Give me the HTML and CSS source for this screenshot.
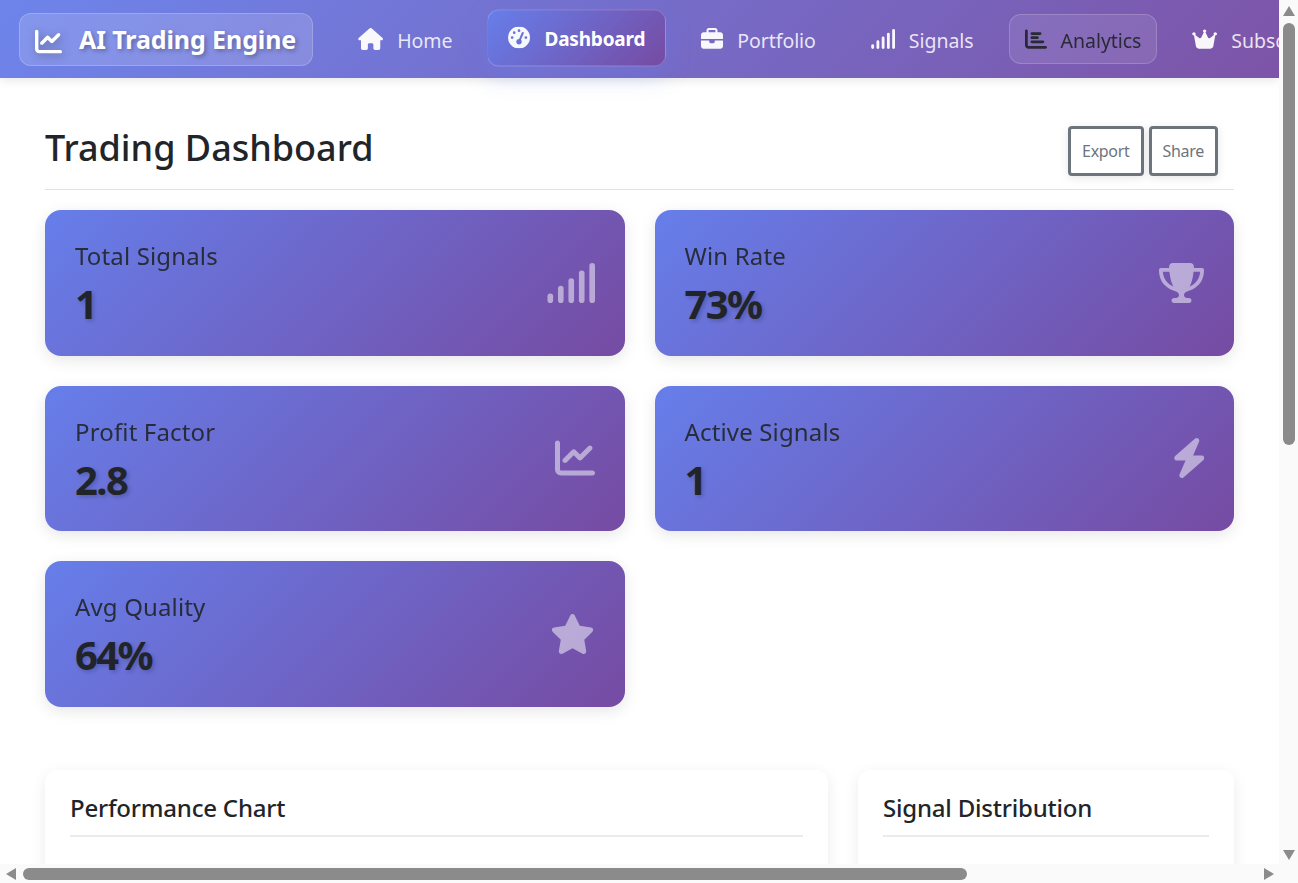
FILE: index.html
```html
<!DOCTYPE html>
<html lang="en">
<head>
    <meta charset="UTF-8">
    <meta name="viewport" content="width=device-width, initial-scale=1.0">
    <title>Trading Dashboard</title>
    <link rel="stylesheet" href="styles.css">
</head>
<body>
    <svg class="icon-defs" aria-hidden="true">
        <symbol id="i-chart-line" viewBox="0 0 512 512" preserveAspectRatio="xMaxYMid"><path d="M64 64c0-17.7-14.3-32-32-32S0 46.3 0 64V400c0 44.2 35.8 80 80 80H480c17.7 0 32-14.3 32-32s-14.3-32-32-32H80c-8.8 0-16-7.2-16-16V64zm406.6 86.6c12.5-12.5 12.5-32.8 0-45.3s-32.8-12.5-45.3 0L320 210.7l-57.4-57.4c-12.5-12.5-32.8-12.5-45.3 0l-112 112c-12.5 12.5-12.5 32.8 0 45.3s32.8 12.5 45.3 0L240 221.3l57.4 57.4c12.5 12.5 32.8 12.5 45.3 0l128-128z"/></symbol>
        <symbol id="i-signal" viewBox="0 0 608 512" preserveAspectRatio="xMaxYMid"><rect x="0" y="389" width="72" height="123" rx="36"/><rect x="134" y="291" width="72" height="221" rx="36"/><rect x="268" y="195" width="72" height="317" rx="36"/><rect x="402" y="97" width="72" height="415" rx="36"/><rect x="536" y="0" width="72" height="512" rx="36"/></symbol>
        <symbol id="i-house" viewBox="0 0 576 512" preserveAspectRatio="xMaxYMid"><path d="M575.8 255.5c0 18-15 32.1-32 32.1h-32l.7 160.2c0 2.7-.2 5.4-.5 8.1V472c0 22.1-17.9 40-40 40H456c-1.1 0-2.2 0-3.3-.1c-1.4 .1-2.8 .1-4.2 .1H416 392c-22.1 0-40-17.9-40-40V448 384c0-17.7-14.3-32-32-32H256c-17.7 0-32 14.3-32 32v64 24c0 22.1-17.9 40-40 40H160 128.1c-1.5 0-3-.1-4.5-.2c-1.2 .1-2.4 .2-3.6 .2H104c-22.1 0-40-17.9-40-40V360c0-.9 0-1.9 .1-2.8V287.6H32c-18 0-32-14-32-32.1c0-9 3-17 10-24L266.4 8c7-7 15-8 22-8s15 2 21 7L564.8 231.5c8 7 12 15 11 24z"/></symbol>
        <symbol id="i-gauge" viewBox="0 0 512 512" preserveAspectRatio="xMaxYMid"><path d="M0 256a256 256 0 1 1 512 0A256 256 0 1 1 0 256zM288 96a32 32 0 1 0 -64 0 32 32 0 1 0 64 0zM256 416c35.3 0 64-28.7 64-64c0-17.4-6.9-33.1-18.1-44.6L366 161.7c5.3-12.1-.2-26.3-12.3-31.6s-26.3 .2-31.6 12.3L257.9 288c-.6 0-1.3 0-1.9 0c-35.3 0-64 28.7-64 64s28.7 64 64 64zM176 144a32 32 0 1 0 -64 0 32 32 0 1 0 64 0zM96 288a32 32 0 1 0 0-64 32 32 0 1 0 0 64zm352-32a32 32 0 1 0 -64 0 32 32 0 1 0 64 0z"/></symbol>
        <symbol id="i-briefcase" viewBox="0 0 512 512" preserveAspectRatio="xMaxYMid"><path d="M184 48H328c4.4 0 8 3.6 8 8V96H176V56c0-4.4 3.6-8 8-8zm-56 8V96H64C28.7 96 0 124.7 0 160v96H192 320 512V160c0-35.3-28.7-64-64-64H384V56c0-30.9-25.1-56-56-56H184c-30.9 0-56 25.1-56 56zM512 288H320v32c0 17.7-14.3 32-32 32H224c-17.7 0-32-14.3-32-32V288H0V416c0 35.3 28.7 64 64 64H448c35.3 0 64-28.7 64-64V288z"/></symbol>
        <symbol id="i-chart-bar" viewBox="0 0 512 512" preserveAspectRatio="xMaxYMid"><path d="M32 32c17.7 0 32 14.3 32 32V400c0 8.8 7.2 16 16 16H480c17.7 0 32 14.3 32 32s-14.3 32-32 32H80c-44.2 0-80-35.8-80-80V64C0 46.3 14.3 32 32 32zm96 96c0-17.7 14.3-32 32-32l192 0c17.7 0 32 14.3 32 32s-14.3 32-32 32l-192 0c-17.7 0-32-14.3-32-32zm32 64H288c17.7 0 32 14.3 32 32s-14.3 32-32 32H160c-17.7 0-32-14.3-32-32s14.3-32 32-32zm0 96H416c17.7 0 32 14.3 32 32s-14.3 32-32 32H160c-17.7 0-32-14.3-32-32s14.3-32 32-32z"/></symbol>
        <symbol id="i-crown" viewBox="0 0 576 512" preserveAspectRatio="xMaxYMid"><path d="M309 106c11.4-7 19-19.7 19-34c0-22.1-17.9-40-40-40s-40 17.9-40 40c0 14.4 7.6 27 19 34L209.7 220.6c-9.1 18.2-32.7 23.4-48.6 10.7L72 160c5-6.7 8-15 8-24c0-22.1-17.9-40-40-40S0 113.9 0 136s17.9 40 40 40c.2 0 .5 0 .7 0L86.4 427.4c5.5 30.4 32 52.6 63 52.6H426.6c30.9 0 57.4-22.1 63-52.6L535.3 176c.2 0 .5 0 .7 0c22.1 0 40-17.9 40-40s-17.9-40-40-40s-40 17.9-40 40c0 9 3 17.3 8 24l-89.1 71.3c-15.9 12.7-39.5 7.5-48.6-10.7L309 106z"/></symbol>
        <symbol id="i-trophy" viewBox="0 0 576 512" preserveAspectRatio="xMaxYMid"><path d="M400 0H176c-26.5 0-48.1 21.8-47.1 48.2c.2 5.3 .4 10.6 .7 15.8H24C10.7 64 0 74.7 0 88c0 92.6 33.5 157 78.5 200.7c44.3 43.1 98.3 64.8 138.1 75.8c23.4 6.5 39.4 26 39.4 45.6c0 20.9-17 37.9-37.9 37.9H192c-17.7 0-32 14.3-32 32s14.3 32 32 32H384c17.7 0 32-14.3 32-32s-14.3-32-32-32H357.9C337 448 320 431 320 410.1c0-19.6 15.9-39.2 39.4-45.6c39.9-11 93.9-32.7 138.2-75.8C542.5 245 576 180.6 576 88c0-13.3-10.7-24-24-24H446.4c.3-5.2 .5-10.4 .7-15.8C448.1 21.8 426.5 0 400 0zM48.9 112h84.4c9.1 90.1 29.2 150.3 51.9 190.6c-24.9-11-50.8-26.5-73.2-48.3c-32-31.1-58-76-63-142.3zM464.1 254.3c-22.4 21.8-48.3 37.3-73.2 48.3c22.7-40.3 42.8-100.5 51.9-190.6h84.4c-5.1 66.3-31.1 111.2-63 142.3z"/></symbol>
        <symbol id="i-bolt" viewBox="0 0 412 512" preserveAspectRatio="xMaxYMid"><path d="M349.4 44.6c5.9-13.7 1.5-29.7-10.6-38.5s-28.6-8-39.9 1.8l-256 224c-10 8.8-13.6 22.9-8.9 35.3S50.7 288 64 288H175.5L98.6 467.4c-5.9 13.7-1.5 29.7 10.6 38.5s28.6 8 39.9-1.8l256-224c10-8.8 13.6-22.9 8.9-35.3s-16.6-20.7-30-20.7H272.5L349.4 44.6z"/></symbol>
        <symbol id="i-star" viewBox="0 0 576 512" preserveAspectRatio="xMaxYMid"><path d="M316.9 18C311.6 7 300.4 0 288.1 0s-23.4 7-28.8 18L195 150.3 51.4 171.5c-12 1.8-22 10.2-25.7 21.7s-.7 24.2 7.9 32.7L137.8 329 113.2 474.7c-2 12 3 24.2 12.9 31.3s23 8 33.8 2.3l128.3-68.5 128.3 68.5c10.8 5.7 23.9 4.9 33.8-2.3s14.9-19.3 12.9-31.3L438.5 329 542.7 225.9c8.6-8.5 11.7-21.2 7.9-32.7s-13.7-19.9-25.7-21.7L381.2 150.3 316.9 18z"/></symbol>
    </svg>

    <div class="window">
        <div class="page">
            <nav class="navbar">
                <a class="brand" href="#">
                    <svg class="brand-icon"><use href="#i-chart-line"/></svg>
                    <span>AI Trading Engine</span>
                </a>
                <ul class="nav-list">
                    <li><a class="nav-link" href="#"><svg class="nav-icon wide"><use href="#i-house"/></svg><span>Home</span></a></li>
                    <li><a class="nav-link active" href="#"><svg class="nav-icon"><use href="#i-gauge"/></svg><span>Dashboard</span></a></li>
                    <li><a class="nav-link" href="#"><svg class="nav-icon"><use href="#i-briefcase"/></svg><span>Portfolio</span></a></li>
                    <li><a class="nav-link" href="#"><svg class="nav-icon bars"><use href="#i-signal"/></svg><span>Signals</span></a></li>
                    <li><a class="nav-link hover" href="#"><svg class="nav-icon"><use href="#i-chart-bar"/></svg><span>Analytics</span></a></li>
                    <li><a class="nav-link" href="#"><svg class="nav-icon wide"><use href="#i-crown"/></svg><span>Subscription</span></a></li>
                </ul>
            </nav>

            <main class="content">
                <header class="page-header">
                    <h1>Trading Dashboard</h1>
                    <div class="actions">
                        <button class="btn-outline" type="button">Export</button>
                        <button class="btn-outline" type="button">Share</button>
                    </div>
                </header>

                <section class="stats">
                    <div class="stat-card">
                        <div class="stat-text"><h3>Total Signals</h3><p class="stat-value">1</p></div>
                        <svg class="stat-icon"><use href="#i-signal"/></svg>
                    </div>
                    <div class="stat-card">
                        <div class="stat-text"><h3>Win Rate</h3><p class="stat-value">73%</p></div>
                        <svg class="stat-icon"><use href="#i-trophy"/></svg>
                    </div>
                    <div class="stat-card">
                        <div class="stat-text"><h3>Profit Factor</h3><p class="stat-value">2.8</p></div>
                        <svg class="stat-icon"><use href="#i-chart-line"/></svg>
                    </div>
                    <div class="stat-card">
                        <div class="stat-text"><h3>Active Signals</h3><p class="stat-value">1</p></div>
                        <svg class="stat-icon"><use href="#i-bolt"/></svg>
                    </div>
                    <div class="stat-card">
                        <div class="stat-text"><h3>Avg Quality</h3><p class="stat-value">64%</p></div>
                        <svg class="stat-icon"><use href="#i-star"/></svg>
                    </div>
                </section>

                <section class="panels">
                    <div class="panel"><h2>Performance Chart</h2></div>
                    <div class="panel"><h2>Signal Distribution</h2></div>
                </section>
            </main>
        </div>

        <div class="vbar">
            <span class="arrow-up"></span>
            <div class="vbar-track"><div class="vbar-thumb"></div></div>
            <span class="arrow-down"></span>
        </div>
        <div class="hbar">
            <span class="arrow-left"></span>
            <div class="hbar-track"><div class="hbar-thumb"></div></div>
            <span class="arrow-right"></span>
        </div>
        <div class="corner"></div>
    </div>
</body>
</html>
```

FILE: styles.css
```css
* {
    box-sizing: border-box;
}
body {
    margin: 0;
    font-family: "Noto Sans", "Open Sans", Arial, sans-serif;
    color: #212529;
    background: #fff;
}
.icon-defs {
    display: none;
}
.window {
    display: grid;
    grid-template-columns: 1279px 19px;
    grid-template-rows: 864px 19px;
    height: 883px;
    overflow: hidden;
}
.page {
    overflow: hidden;
    min-width: 0;
}

/* navbar */
.navbar {
    display: flex;
    align-items: center;
    height: 78px;
    padding-left: 19px;
    gap: 29px;
    white-space: nowrap;
    background: linear-gradient(135deg, rgba(102, 126, 234, 0.95) 0%, rgba(118, 75, 162, 0.95) 100%);
    box-shadow: 0 2px 10px rgba(0, 0, 0, 0.1);
}
.brand {
    display: flex;
    align-items: center;
    gap: 17px;
    height: 53px;
    padding: 0 16px 0 15px;
    font-size: 25px;
    font-weight: 700;
    letter-spacing: -0.1px;
    color: #fff;
    text-decoration: none;
    text-shadow: 2px 2px 4px rgba(0, 0, 0, 0.3);
    background: rgba(255, 255, 255, 0.15);
    border: 1px solid rgba(255, 255, 255, 0.2);
    border-radius: 12px;
}
.brand-icon {
    width: 27px;
    height: 27px;
    margin-top: 4px;
    fill: #fff;
    filter: drop-shadow(2px 2px 4px rgba(0, 0, 0, 0.3));
}
.nav-list {
    display: flex;
    align-items: center;
    gap: 19px;
    margin: 0;
    padding: 0;
    list-style: none;
}
.nav-link {
    display: flex;
    align-items: center;
    gap: 14px;
    height: 50px;
    padding: 2px 15px 0;
    font-size: 19.5px;
    letter-spacing: -0.05px;
    color: rgba(255, 255, 255, 0.85);
    text-decoration: none;
    border: 1px solid transparent;
    border-radius: 12px;
}
.nav-icon {
    width: 22px;
    height: 22px;
    margin-top: -3px;
    fill: rgba(255, 255, 255, 0.95);
}
.nav-icon.wide {
    width: 25px;
}
.nav-icon.bars {
    width: 28px;
    height: 20px;
}
.nav-link.active {
    height: 57px;
    padding: 2px 20px 0;
    font-size: 19px;
    font-weight: 700;
    letter-spacing: -0.2px;
    color: #fff;
    background: linear-gradient(135deg, #667eea 0%, #764ba2 100%);
    border-color: rgba(255, 255, 255, 0.2);
    box-shadow: 0 8px 25px rgba(102, 126, 234, 0.3);
    transform: translateY(-1.5px);
}
.nav-link.hover {
    color: #212529;
    opacity: 0.9;
    background: rgba(255, 255, 255, 0.1);
    border-color: rgba(255, 255, 255, 0.2);
}
.nav-link.hover .nav-icon {
    fill: #212529;
}

/* main content */
.content {
    padding: 48px 45px 0;
}
.page-header {
    display: flex;
    justify-content: space-between;
    align-items: flex-start;
    height: 64px;
    padding-right: 16px;
    border-bottom: 1px solid #dee2e6;
}
.page-header h1 {
    margin: 0;
    font-size: 36px;
    line-height: 44px;
    font-weight: 500;
}
.actions {
    display: flex;
    gap: 5px;
}
.btn-outline {
    height: 50px;
    padding: 0 11px;
    font-family: inherit;
    font-size: 16px;
    letter-spacing: -0.3px;
    color: #6c757d;
    background: #fff;
    border: 3px solid #6c757d;
    border-radius: 4px;
    box-shadow: 0 2px 10px rgba(0, 0, 0, 0.1);
}

.stats {
    display: grid;
    grid-template-columns: 1fr 1fr;
    gap: 30px;
    margin-top: 20px;
}
.stat-card {
    display: flex;
    justify-content: space-between;
    align-items: center;
    height: 145.5px;
    padding: 0 30px;
    background: linear-gradient(135deg, #667eea 0%, #764ba2 100%);
    border-radius: 16px;
    box-shadow: 0 4px 15px rgba(0, 0, 0, 0.1);
}
.stat-text {
    padding-top: 1.5px;
}
.stat-card h3 {
    margin: 0;
    font-size: 24px;
    font-weight: 400;
    letter-spacing: 0.15px;
    opacity: 0.9;
}
.stat-value {
    margin: 8px 0 0;
    font-size: 40px;
    line-height: 48px;
    font-weight: 700;
    letter-spacing: -1.6px;
    text-shadow: 2px 2px 4px rgba(0, 0, 0, 0.2);
}
.stat-icon {
    width: 48px;
    height: 40px;
    fill: rgba(255, 255, 255, 0.5);
}

.panels {
    display: grid;
    grid-template-columns: 783px 1fr;
    gap: 30px;
    margin-top: 63px;
}
.panel {
    height: 300px;
    padding: 21px 25px 25px;
    background: #fff;
    border-radius: 12px;
    box-shadow: 0 4px 15px rgba(0, 0, 0, 0.08);
}
.panel h2 {
    margin: 0;
    padding-bottom: 11px;
    font-size: 24px;
    font-weight: 500;
    letter-spacing: -0.2px;
    border-bottom: 2px solid #e9ecef;
}

/* scrollbars, drawn because the window's own ones are not in the picture */
.vbar, .hbar, .corner {
    background: #fafafa;
}
.vbar {
    display: flex;
    flex-direction: column;
    align-items: center;
}
.hbar {
    display: flex;
    align-items: center;
}
.vbar-track {
    flex: 1;
    width: 100%;
    padding: 7px 4px 0;
}
.vbar-thumb {
    width: 12px;
    height: 422px;
    background: #8b8b8b;
    border-radius: 6px;
}
.hbar-track {
    flex: 1;
    height: 100%;
    padding: 4px 0 0 7px;
}
.hbar-thumb {
    width: 944px;
    height: 12px;
    background: #8b8b8b;
    border-radius: 6px;
}
.arrow-up, .arrow-down, .arrow-left, .arrow-right {
    flex: none;
    width: 0;
    height: 0;
    border-style: solid;
    border-color: transparent;
}
.arrow-up {
    margin-top: 6px;
    border-width: 0 6px 10px;
    border-bottom-color: #8b8b8b;
}
.arrow-down {
    margin-bottom: 4px;
    border-width: 10px 6px 0;
    border-top-color: #8b8b8b;
}
.arrow-left {
    margin-left: 6px;
    border-width: 6px 10px 6px 0;
    border-right-color: #8b8b8b;
}
.arrow-right {
    margin-right: 5px;
    border-width: 6px 0 6px 10px;
    border-left-color: #8b8b8b;
}
```
